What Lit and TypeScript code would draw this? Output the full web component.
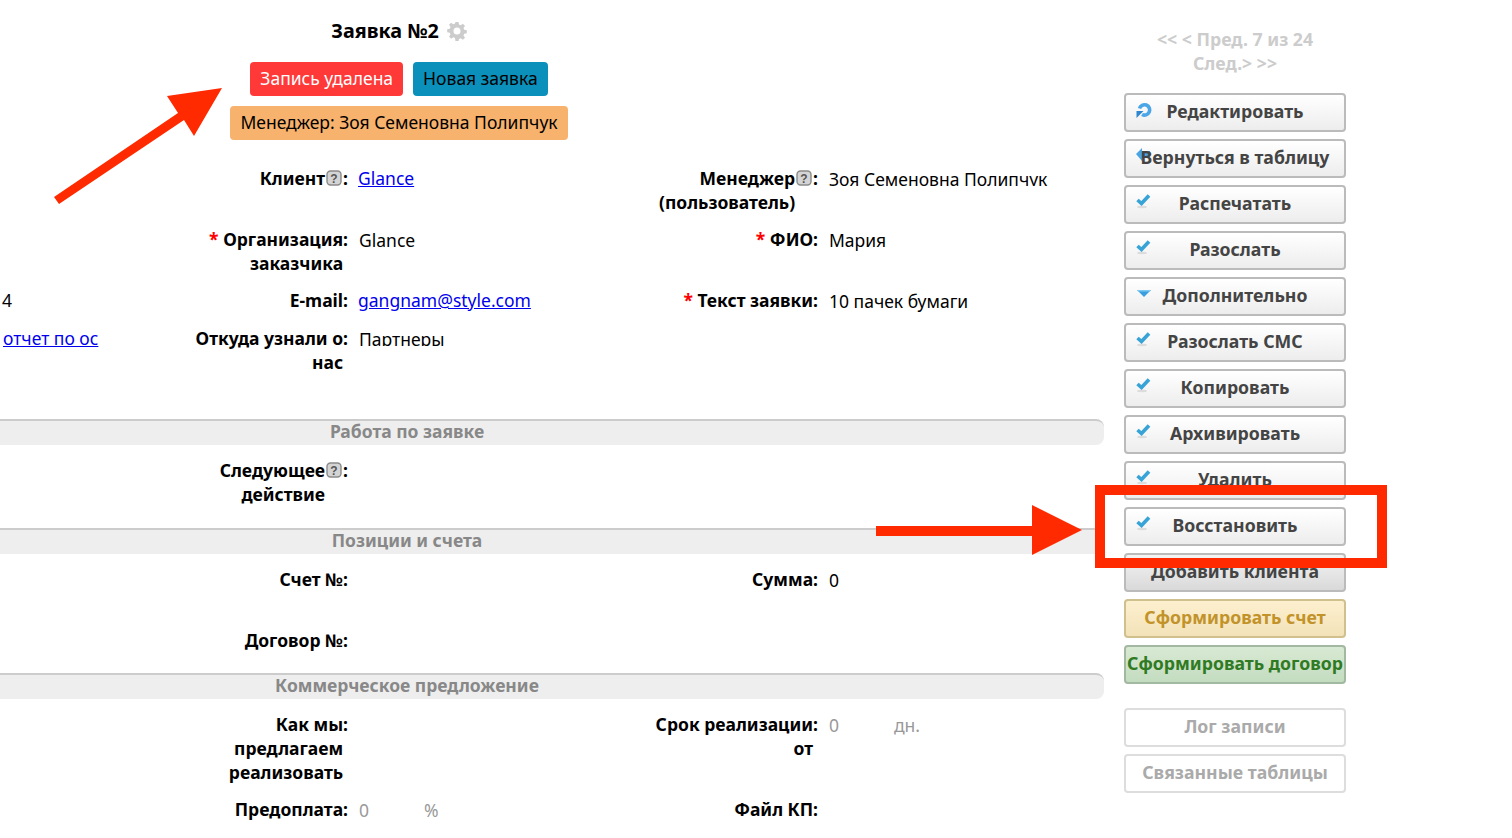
import { LitElement, html, css, svg } from "lit";
import { customElement } from "lit/decorators.js";

const help = html`<svg class="help" viewBox="0 0 16 16" aria-hidden="true"><rect x="1" y="1" width="14" height="14" rx="3.500" fill="#d4d4d4" stroke="#8a8a8a" stroke-width="1.400"/><text x="8" y="12.500" text-anchor="middle" font-size="12" font-weight="700" font-family="Liberation Sans, sans-serif" fill="#555">?</text></svg>`;

const icons: Record<string, unknown> = {
  check: svg`<ellipse cx="6" cy="14" rx="5" ry="1.200" fill="#dcdcdc"/><path d="M1.500 7l4 3.500L13 2.500" fill="none" stroke="#37a3d6" stroke-width="3.600"/>`,
  refresh: svg`<path d="M3.500 7.500a5.200 5.200 0 1 1 2.500 6" fill="none" stroke="#4aa6e6" stroke-width="3.600"/><path d="M.5 10h7l-7 7z" fill="#2d86d0"/>`,
  back: svg`<path d="M0 7l6-6v3h8v7H6v3z" fill="#4aa3e4"/>`,
  down: svg`<path d="M1 5h14l-7 7z" fill="#3a9fe0"/><path d="M1 5h14l-1.500 1.500h-11z" fill="#7ccaf0"/>`,
};

@customElement("app-root")
export class AppRoot extends LitElement {
  static styles = css`
    :host { display: block; width: 1512px; height: 838px; overflow: hidden; position: relative; background: #fff;
      font-family: "Noto Sans", sans-serif; font-size: 17.5px; line-height: 24px; color: #000; }
    .page { display: flex; align-items: flex-start; }
    .main { width: 1104px; flex: none; padding-top: 19px; }
    .head { width: 798px; display: flex; flex-direction: column; align-items: center; }
    .title { display: flex; align-items: center; gap: 8px; font-weight: 700; font-size: 19.800px; height: 24px; }
    .gear { width: 20px; height: 20px; }
    .badges { display: flex; gap: 10px; margin-top: 19px; }
    .badge { height: 34px; line-height: 32px; padding: 0 10px; border-radius: 4px; white-space: nowrap; }
    .del { background: #ff3838; color: #fff; }
    .new { background: #0a90bb; }
    .mgr { background: #f7b26d; margin-top: 10px; }
    .rows { margin-top: 26px; }
    .row { display: grid; grid-template-columns: 187px 161px 299px 171px 1fr; margin-bottom: 13px; }
    .tall { min-height: 48px; }
    .far { margin-bottom: 45px; }
    .side { padding-left: 2px; white-space: nowrap; }
    .side.link { padding-left: 3px; }
    .label { grid-column: 2; display: flex; justify-content: flex-end; font-weight: 700; white-space: nowrap; }
    .label.b { grid-column: 4; }
    .txt { text-align: right; }
    .suf { display: flex; align-items: flex-start; }
    .help { width: 16px; height: 16px; margin: 4px 1px 0 1px; flex: none; }
    .val { padding: 1px 0 0 11px; white-space: nowrap; }
    .val.b { grid-column: 5; }
    .val a { margin-left: -1px; position: relative; top: -1px; }
    .clip { height: 19px; overflow: hidden; }
    .req { color: #f00; }
    .dim { color: #999; display: flex; }
    .dim span:first-child { width: 65px; }
    a { color: #00e; }
    .bar { height: 26px; line-height: 20px; box-sizing: border-box; border-top: 2px solid #ccc; background: #eee;
      border-radius: 0 8px 8px 0; color: #888; font-weight: 700; text-align: center; padding: 0 290px; margin-left: -290px; margin-bottom: 13px; }
    .bar.s2 { margin-top: 22px; }
    .bar.s3 { margin-top: 21px; }
    .sidebar { width: 222px; margin-left: 20px; padding-top: 27px; flex: none; font-size: 17.700px; }
    .pager { color: #ccc; font-weight: 700; text-align: center; margin-bottom: 18px; }
    .btn { position: relative; height: 39px; box-sizing: border-box; border: 2px solid #bbb; border-radius: 4px; margin-bottom: 7px;
      background: linear-gradient(#fff, #ededed); color: #444; font-weight: 700; text-align: center; line-height: 32px; white-space: nowrap; }
    .btn svg { position: absolute; left: 10px; top: 6px; width: 16px; height: 16px; overflow: visible; }
    .btn span { position: relative; }
    .darker { background: linear-gradient(#f4f4f4, #d9d9d9); }
    .yellow { background: linear-gradient(#fdf0cf, #f3e2b8); border-color: #d0c08e; color: #c2932a; }
    .green { background: linear-gradient(#d9e9d3, #c3dcc0); border-color: #a3b8a0; color: #2f7a23; }
    .ghost { background: #fff; border-color: #ddd; color: #aaa; }
    .gap { margin-top: 24px; }
    .overlay { position: absolute; inset: 0; width: 1512px; height: 838px; pointer-events: none; }
  `;

  private btn(text: string, icon?: string, cls = "") {
    return html`<div class="btn ${cls}">${icon ? html`<svg viewBox="0 0 16 16">${icons[icon]}</svg>` : ""}<span>${text}</span></div>`;
  }

  render() {
    return html`
      <div class="page">
        <div class="main">
          <div class="head">
            <div class="title">Заявка №2
              <svg class="gear" viewBox="0 0 20 20"><path fill="#ccc" fill-rule="evenodd" d="M8.500 1h3l.5 2.600 1.700.7 2.200-1.500 2.100 2.100-1.500 2.200.7 1.700 2.600.5v3l-2.600.5-.7 1.700 1.500 2.200-2.100 2.100-2.200-1.500-1.700.7-.5 2.600h-3L8 16.900l-1.700-.7-2.200 1.500L2 15.600l1.500-2.200-.7-1.700L.2 11.200v-3l2.600-.5.700-1.700L2 3.800l2.100-2.100 2.200 1.500L8 2.500zM10 6.500a3.500 3.500 0 1 0 0 7 3.500 3.500 0 0 0 0-7z"/></svg>
            </div>
            <div class="badges"><div class="badge del">Запись удалена</div><div class="badge new">Новая заявка</div></div>
            <div class="badge mgr">Менеджер: Зоя Семеновна Полипчук</div>
          </div>
          <div class="rows">
            <div class="row">
              <div class="label"><div class="txt">Клиент</div><div class="suf">${help}:</div></div>
              <div class="val"><a href="#">Glance</a></div>
              <div class="label b"><div class="txt">Менеджер<br>(пользователь)</div><div class="suf">${help}:</div></div>
              <div class="val clip">Зоя Семеновна Полипчук</div>
            </div>
            <div class="row">
              <div class="label"><div class="txt"><span class="req">*</span> Организация<br>заказчика</div><div class="suf">:</div></div>
              <div class="val">Glance</div>
              <div class="label b"><div class="txt"><span class="req">*</span> ФИО</div><div class="suf">:</div></div>
              <div class="val">Мария</div>
            </div>
            <div class="row">
              <div class="side">4</div>
              <div class="label"><div class="txt">E-mail</div><div class="suf">:</div></div>
              <div class="val"><a href="#">gangnam@style.com</a></div>
              <div class="label b"><div class="txt"><span class="req">*</span> Текст заявки</div><div class="suf">:</div></div>
              <div class="val">10 пачек бумаги</div>
            </div>
            <div class="row far">
              <div class="side link"><a href="#">отчет по ос</a></div>
              <div class="label"><div class="txt">Откуда узнали о<br>нас</div><div class="suf">:</div></div>
              <div class="val clip">Партнеры</div>
            </div>
            <div class="bar">Работа по заявке</div>
            <div class="row">
              <div class="label"><div class="txt">Следующее<br>действие</div><div class="suf">${help}:</div></div>
            </div>
            <div class="bar s2">Позиции и счета</div>
            <div class="row tall">
              <div class="label"><div class="txt">Счет №</div><div class="suf">:</div></div>
              <div class="val"></div>
              <div class="label b"><div class="txt">Сумма</div><div class="suf">:</div></div>
              <div class="val">0</div>
            </div>
            <div class="row">
              <div class="label"><div class="txt">Договор №</div><div class="suf">:</div></div>
            </div>
            <div class="bar s3">Коммерческое предложение</div>
            <div class="row">
              <div class="label"><div class="txt">Как мы<br>предлагаем<br>реализовать</div><div class="suf">:</div></div>
              <div class="val"></div>
              <div class="label b"><div class="txt">Срок реализации<br>от</div><div class="suf">:</div></div>
              <div class="val dim"><span>0</span><span>дн.</span></div>
            </div>
            <div class="row">
              <div class="label"><div class="txt">Предоплата</div><div class="suf">:</div></div>
              <div class="val dim"><span>0</span><span>%</span></div>
              <div class="label b"><div class="txt">Файл КП</div><div class="suf">:</div></div>
            </div>
          </div>
        </div>
        <div class="sidebar">
          <div class="pager">&lt;&lt; &lt; Пред. 7 из 24<br>След.&gt; &gt;&gt;</div>
          ${this.btn("Редактировать", "refresh")}
          ${this.btn("Вернуться в таблицу", "back")}
          ${this.btn("Распечатать", "check")}
          ${this.btn("Разослать", "check")}
          ${this.btn("Дополнительно", "down")}
          ${this.btn("Разослать СМС", "check")}
          ${this.btn("Копировать", "check")}
          ${this.btn("Архивировать", "check")}
          ${this.btn("Удалить", "check")}
          ${this.btn("Восстановить", "check")}
          ${this.btn("Добавить клиента", undefined, "darker")}
          ${this.btn("Сформировать счет", undefined, "yellow")}
          ${this.btn("Сформировать договор", undefined, "green")}
          <div class="gap"></div>
          ${this.btn("Лог записи", undefined, "ghost")}
          ${this.btn("Связанные таблицы", undefined, "ghost")}
        </div>
      </div>
      <svg class="overlay" viewBox="0 0 1512 838">
        <path fill="#ff2a00" d="M222 88L194 136 184 120 59 204 54 197 178 113 167 96z"/>
        <path fill="#ff2a00" d="M876 526H1032V505L1082 530 1032 555V536H876z"/>
        <path fill="#ff2a00" fill-rule="evenodd" d="M1095 485H1387V568H1095zM1105 495V558H1377V495z"/>
      </svg>
    `;
  }
}
